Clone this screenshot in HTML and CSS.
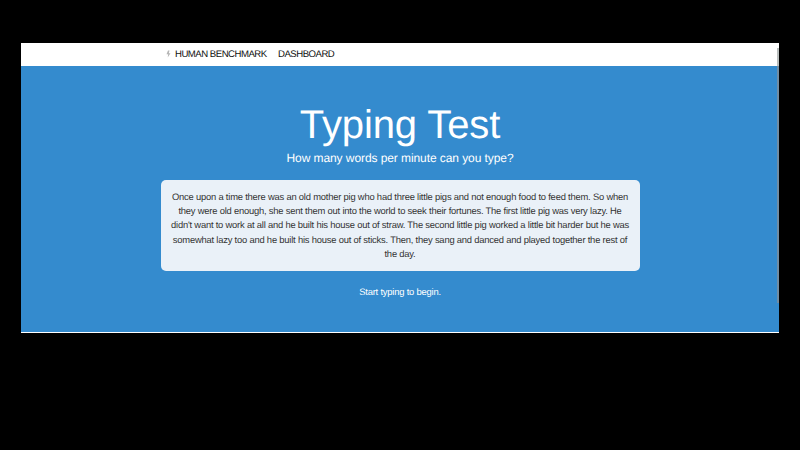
FILE: index.html
```html
<!DOCTYPE html>
<html lang="en">
<head>
<meta charset="utf-8">
<title>Typing Test</title>
<link rel="stylesheet" href="styles.css">
</head>
<body>
<div class="window">
  <nav class="nav">
    <svg class="bolt" viewBox="0 0 5 8"><path d="M2 0.5 L0.5 4.3 H2.2 L1.7 7.5 L4.5 3.2 H2.8 L3.5 0.5 Z" /></svg>
    <span class="brand">HUMAN BENCHMARK</span>
    <span class="link">DASHBOARD</span>
  </nav>
  <main class="hero">
    <h1>Typing Test</h1>
    <p class="subtitle">How many words per minute can you type?</p>
    <div class="passage">
      <div>Once upon a time there was an old mother pig who had three little pigs and not enough food to feed them. So when</div>
      <div>they were old enough, she sent them out into the world to seek their fortunes. The first little pig was very lazy. He</div>
      <div>didn't want to work at all and he built his house out of straw. The second little pig worked a little bit harder but he was</div>
      <div>somewhat lazy too and he built his house out of sticks. Then, they sang and danced and played together the rest of</div>
      <div>the day.</div>
    </div>
    <p class="hint">Start typing to begin.</p>
  </main>
  <div class="scrollbar"></div>
</div>
</body>
</html>
```
FILE: styles.css
```css
* { box-sizing: border-box; }
body { margin: 0; padding: 43px 21px 0; height: 450px; background: #000; overflow: hidden; font-family: "Liberation Sans", Arial, sans-serif; text-rendering: geometricPrecision; }
.window { position: relative; width: 758px; height: 290px; background: #348bce; border-bottom: 1px solid #fff; }
.nav { display: flex; align-items: flex-start; height: 23px; padding-left: 145px; background: #fff; font-size: 9.6px; line-height: 23px; letter-spacing: -0.5px; color: #111; white-space: nowrap; }
.bolt { width: 5px; height: 8px; margin: 7px 4px 0 0; fill: #b5b5b5; }
.brand { width: 103px; }
.hero { display: flex; flex-direction: column; align-items: center; color: #fff; text-align: center; }
h1 { margin: 35px 0 0; font-size: 40px; line-height: 48px; letter-spacing: -0.12px; font-weight: 400; }
.subtitle { margin: 0; font-size: 12px; line-height: 18px; letter-spacing: -0.08px; }
.passage { width: 479px; height: 91px; margin-top: 13px; padding-top: 10px; border-radius: 5px; background: #eaf1f8; color: #333; font-size: 9.4px; line-height: 14.2px; letter-spacing: -0.2px; white-space: nowrap; }
.hint { margin: 14px 0 0; font-size: 9.4px; line-height: 14px; letter-spacing: -0.2px; }
.scrollbar { position: absolute; top: 5px; right: 0; width: 2px; height: 255px; background: linear-gradient(#b9bebd 0 18px, #708da4 18px); }
```
